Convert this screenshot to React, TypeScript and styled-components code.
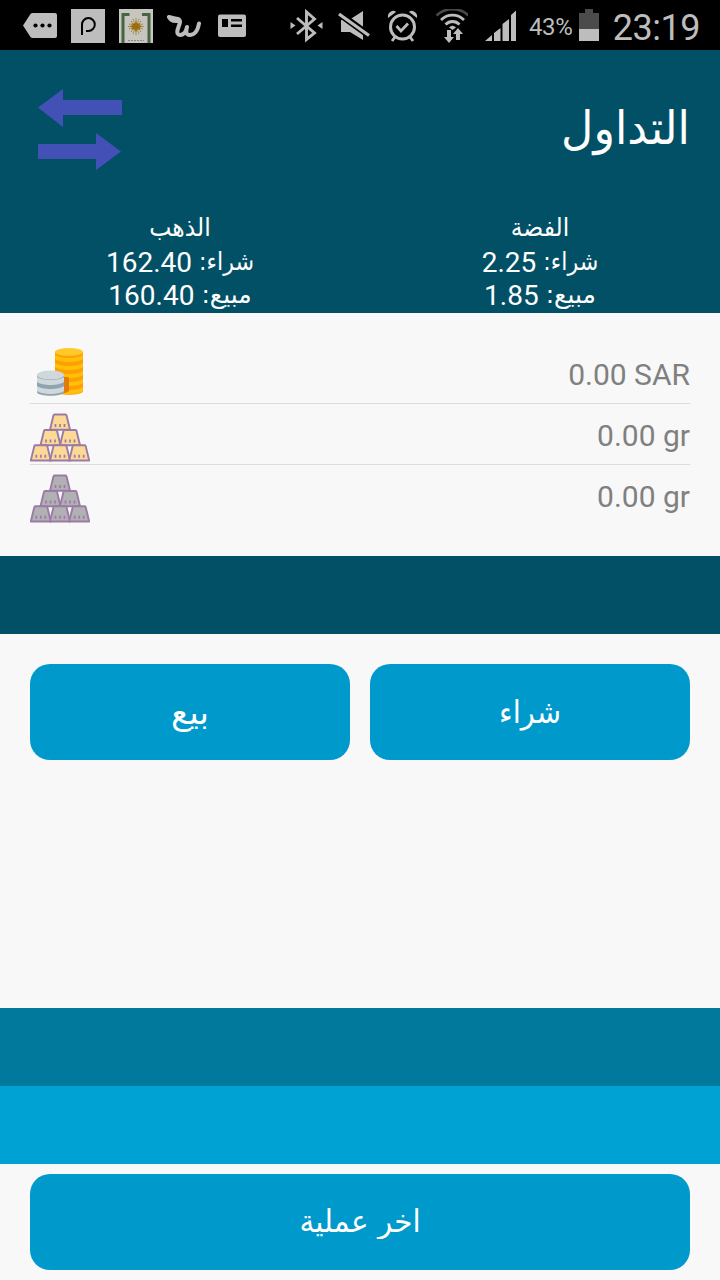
import React from "react";
import styled, { createGlobalStyle } from "styled-components";

const Global = createGlobalStyle`
  * { box-sizing: border-box; }
  body { margin: 0; background: #f8f8f8; font-family: Roboto, "DejaVu Sans", sans-serif; }
`;

const Screen = styled.main`
  display: flex;
  flex-direction: column;
  width: 720px;
  height: 1280px;
  background: #f8f8f8;
  overflow: hidden;
`;

const StatusBar = styled.div`
  display: flex;
  align-items: flex-start;
  flex: none;
  height: 50px;
  padding: 9px 20px 0 23px;
  background: #000;
  color: #bdbdbd;
`;

const Notifications = styled.div`
  display: flex;
  gap: 14px;
`;

const SystemIcons = styled.div`
  display: flex;
  gap: 14px;
  margin-left: 41px;
`;

const Glyph = styled.svg<{ $w?: number }>`
  display: block;
  flex: none;
  width: ${(p) => p.$w ?? 34}px;
  height: 34px;
`;

const Percent = styled.span`
  width: 50px;
  margin-left: 13px;
  font-size: 24px;
  line-height: 37px;
  letter-spacing: -0.4px;
`;

const Clock = styled.span`
  margin-left: 14px;
  font-size: 36px;
  line-height: 38px;
  letter-spacing: -0.5px;
  white-space: nowrap;
`;

const Header = styled.header`
  display: flex;
  flex-direction: column;
  flex: none;
  height: 263px;
  background: #025066;
  color: #fff;
`;

const TitleRow = styled.div`
  display: flex;
  justify-content: space-between;
  align-items: center;
  height: 160px;
  padding: 0 30px;
`;

const Title = styled.h1`
  margin: 0;
  font-size: 42px;
  font-weight: 400;
  line-height: 60px;
`;

const Ar = styled.span<{ $size: number; $stretch?: number; $lift?: number }>`
  display: inline-block;
  font-family: "DejaVu Sans", sans-serif;
  font-size: ${(p) => p.$size}px;
  line-height: 1;
  white-space: nowrap;
  transform: translateY(${(p) => -(p.$lift ?? 0)}px) scaleY(${(p) => p.$stretch ?? 1});
`;

const Prices = styled.div`
  display: grid;
  grid-template-columns: 1fr 1fr;
  padding-top: 1px;
`;

const Metal = styled.section`
  display: flex;
  flex-direction: column;
  align-items: center;
`;

const PriceLine = styled.div`
  display: flex;
  align-items: center;
  justify-content: center;
  gap: 7px;
  height: 33px;
  font-size: 28px;
  line-height: 33px;
`;

const Amount = styled.span`
  padding-top: 4px;
`;

const Balances = styled.section`
  flex: none;
  height: 243px;
  padding: 30px 30px 0;
`;

const Balance = styled.div`
  display: flex;
  justify-content: space-between;
  height: 61px;
  border-bottom: 1px solid #dcdcdc;
  color: #808080;
  font-size: 30px;
  line-height: 63px;
  &:last-child { border-bottom: 0; }
`;

const Band = styled.div<{ $color: string }>`
  flex: none;
  height: 78px;
  background: ${(p) => p.$color};
`;

const Actions = styled.div`
  display: flex;
  flex: 1;
  align-items: flex-start;
  gap: 20px;
  padding: 30px 30px 0;
`;

const Footer = styled.footer`
  display: flex;
  flex: none;
  height: 116px;
  padding: 10px 30px;
`;

const Button = styled.button`
  display: flex;
  flex: 1;
  align-items: center;
  justify-content: center;
  height: 96px;
  padding: 0;
  border: 0;
  border-radius: 20px;
  background: #0099cc;
  color: #fff;
`;

const Picture = styled.svg`
  display: block;
  width: 60px;
  height: 60px;
`;

const TransferArrows = () => (
  <svg width="100" height="100" viewBox="0 0 100 100" fill="#4350b5">
    <path d="M8 27.500 33 9v11h59v15H33v12Z" />
    <path d="M8 64h58V53l25 18.500L66 90V79H8Z" />
  </svg>
);

const Coins = () => (
  <Picture viewBox="0 0 60 60">
    <path d="M25 9v39c0 5 28 5 28 0V9Z" fill="#ff9f05" />
    {[12, 20, 28, 36, 44].map((y) => (
      <path key={y} d={`M25 ${y}c5 4 23 4 28 0v4c-5 4-23 4-28 0Z`} fill="#ffc107" />
    ))}
    <ellipse cx="39" cy="9" rx="14" ry="4" fill="#ffc928" />
    <path d="M34 34q4-1 5 1v13q-2 2-5 2Z" fill="#e07c0b" />
    <path d="M7 32v17c0 5 27 5 27 0V32Z" fill="#90a4ae" />
    {[34, 43].map((y) => (
      <path key={y} d={`M7 ${y}c5 4 22 4 27 0v5c-5 4-22 4-27 0Z`} fill="#cfd8dc" />
    ))}
    <ellipse cx="20.500" cy="32" rx="13.500" ry="4.500" fill="#cfd8dc" />
  </Picture>
);

const barSpots = [[20, 10.5], [10.5, 26], [30, 26], [0.8, 41.3], [20, 41.3], [39.2, 41.3]];

const Ingots = ({ fill }: { fill: string }) => (
  <Picture viewBox="0 0 60 60">
    {barSpots.map(([x, y]) => (
      <g key={`${x}-${y}`} transform={`translate(${x} ${y})`}>
        <path d="M3.500 .8Q3.800 0 4.800 0h10.400q1 0 1.300 .8L20 15.200H0Z" fill={fill} stroke="#9b7ba6" strokeWidth="1.900" strokeLinejoin="round" />
        <path d="M5.500 9.500v3M10 9.500v3M14.500 9.500v3" stroke="#9b7ba6" strokeWidth="1.700" />
      </g>
    ))}
  </Picture>
);

const StatusIcons = () => (
  <>
    <Notifications>
      <Glyph viewBox="0 0 34 34">
        <path d="M0 16.500 7.500 5Q8 4 10 4H32q2 0 2 2V27q0 2-2 2H10q-2 0-2.500-1Z" fill="currentColor" />
        <g fill="#000"><circle cx="12.500" cy="16.500" r="2.100" /><circle cx="19.500" cy="16.500" r="2.100" /><circle cx="26.500" cy="16.500" r="2.100" /></g>
      </Glyph>
      <Glyph viewBox="0 0 34 34">
        <path d="M0 0h34v34H0Z" fill="currentColor" />
        <path d="M11 26V15.500a6.400 6.400 0 1 1 6.400 6.400H15" fill="none" stroke="#000" strokeWidth="2" />
      </Glyph>
      <Glyph viewBox="0 0 34 34">
        <path d="M0 0h34v34H0Z" fill="#c6c5bf" />
        <path d="M10.500 5.500H4V34M23 5.500h7V34" fill="none" stroke="#456543" strokeWidth="3" />
        <path d="M17 9v17M9 17.500h16M12 12l10 11M22 12 12 23M14 10l6 15M20 10l-6 15M10 15l14 5M10 20l14-5" stroke="#a07a24" strokeWidth="1" strokeDasharray="1.500 .7" />
        <path d="M17 12l1.500 3 3-1-1 2.500 3.500 1-3.500 1 1 2.500-3-1L17 23l-1.500-3-3 1 1-2.500-3.500-1 3.500-1-1-2.500 3 1Z" fill="#9b6e0c" />
        <path d="M9 31.500h16" stroke="#858980" strokeDasharray="2 1" />
      </Glyph>
      <Glyph viewBox="0 0 34 34">
        <path d="M2 8q2 4.500 8 4M2 8q5 1.500 9 2 3 1 1.500 5L10.500 21q-1 5 3 5 5-.5 6.500-8-2 8 2.500 8Q30 26 32 14.500" fill="none" stroke="currentColor" strokeWidth="4" strokeLinecap="round" strokeLinejoin="round" />
      </Glyph>
      <Glyph viewBox="0 0 34 34">
        <rect x="3" y="5.500" width="28" height="22.500" rx="2" fill="currentColor" />
        <path d="M7 10h6v8H7ZM16 10h11v2.500H16ZM16 15.500h11V18H16Z" fill="#000" />
      </Glyph>
    </Notifications>
    <SystemIcons>
      <Glyph viewBox="0 0 34 34">
        <path d="M7 9 24.500 24 16.500 30.500V3L24.500 10 7 25" fill="none" stroke="currentColor" strokeWidth="2.900" />
        <path d="M.5 13l5 3.500-5 3.500ZM32.500 13l-5 3.500 5 3.500Z" fill="currentColor" />
      </Glyph>
      <Glyph viewBox="0 0 34 34">
        <path d="M3 11h8L25 2V31L12 23H3Z" fill="currentColor" />
        <path d="M-1 3 32 27" stroke="#000" strokeWidth="7" />
        <path d="M1 5 31 26.500" stroke="currentColor" strokeWidth="3.300" />
      </Glyph>
      <Glyph viewBox="0 0 34 34">
        <circle cx="16.500" cy="18" r="12" fill="none" stroke="currentColor" strokeWidth="3" />
        <path d="M10.500 17l4.500 5 7-7.500M9 28l-3 4M24 28l3 4" fill="none" stroke="currentColor" strokeWidth="2.800" />
        <path d="M2 9Q1 4 6 2q2-1 4 1ZM31 9q1-5-4-7-2-1-4 1Z" fill="currentColor" />
      </Glyph>
      <Glyph viewBox="-1.500 0 34 34">
        <g fill="none" stroke="currentColor" strokeWidth="2.800">
          <path d="M1 6.500C10-2 24-2 33 6.500" stroke="#484848" />
          <path d="M5.500 11C12 4.500 22 4.500 28.500 11M10 15.500c4-4 10-4 14 0" />
        </g>
        <path d="M13.500 18.500q3.500-3.500 7 0L17 21ZM11.500 21h4v7h3l-5 6-5-6h3ZM20.500 31V25h-3l5-6 5 6h-3v6Z" fill="currentColor" />
      </Glyph>
      <Glyph viewBox="-3 0 34 34">
        <path d="M0 32l7-6v6ZM9 24l6.500-5v13H9ZM17.500 15l6.500-5v22h-6.500ZM26 6l6-5.500V32h-6Z" fill="currentColor" />
      </Glyph>
    </SystemIcons>
    <Percent>43%</Percent>
    <Glyph $w={20} viewBox="0 0 20 34">
      <path d="M0 4h6V0h8v4h6v16H0Z" fill="#4b4b4b" />
      <path d="M0 20h20v12H0Z" fill="currentColor" />
    </Glyph>
    <Clock>23:19</Clock>
  </>
);

const metals = [
  { name: "الذهب", buy: "162.40", sell: "160.40" },
  { name: "الفضة", buy: "2.25", sell: "1.85" },
];

export default function App() {
  return (
    <>
      <Global />
      <Screen>
        <StatusBar><StatusIcons /></StatusBar>
        <Header>
          <TitleRow>
            <TransferArrows />
            <Title><Ar $size={44.5} $lift={1} $stretch={1.04}>التداول</Ar></Title>
          </TitleRow>
          <Prices>
            {metals.map((m) => (
              <Metal key={m.name}>
                <PriceLine><Ar $size={23.5} $stretch={1.08}>{m.name}</Ar></PriceLine>
                <PriceLine><Amount>{m.buy}</Amount><Ar $size={22.2} $stretch={1.12} $lift={-1} dir="rtl">شراء:</Ar></PriceLine>
                <PriceLine><Amount>{m.sell}</Amount><Ar $size={25} $lift={-1} dir="rtl">مبيع:</Ar></PriceLine>
              </Metal>
            ))}
          </Prices>
        </Header>
        <Balances>
          <Balance><Coins /><span>0.00 SAR</span></Balance>
          <Balance><Ingots fill="#fcd995" /><span>0.00 gr</span></Balance>
          <Balance><Ingots fill="#b1b1b3" /><span>0.00 gr</span></Balance>
        </Balances>
        <Band $color="#025066" />
        <Actions>
          <Button><Ar $size={34}>بيع</Ar></Button>
          <Button><Ar $size={29} $stretch={1.08}>شراء</Ar></Button>
        </Actions>
        <Band $color="#00799d" />
        <Band $color="#00a2d3" />
        <Footer>
          <Button><Ar $size={29.5} $stretch={1.06}>اخر عملية</Ar></Button>
        </Footer>
      </Screen>
    </>
  );
}
